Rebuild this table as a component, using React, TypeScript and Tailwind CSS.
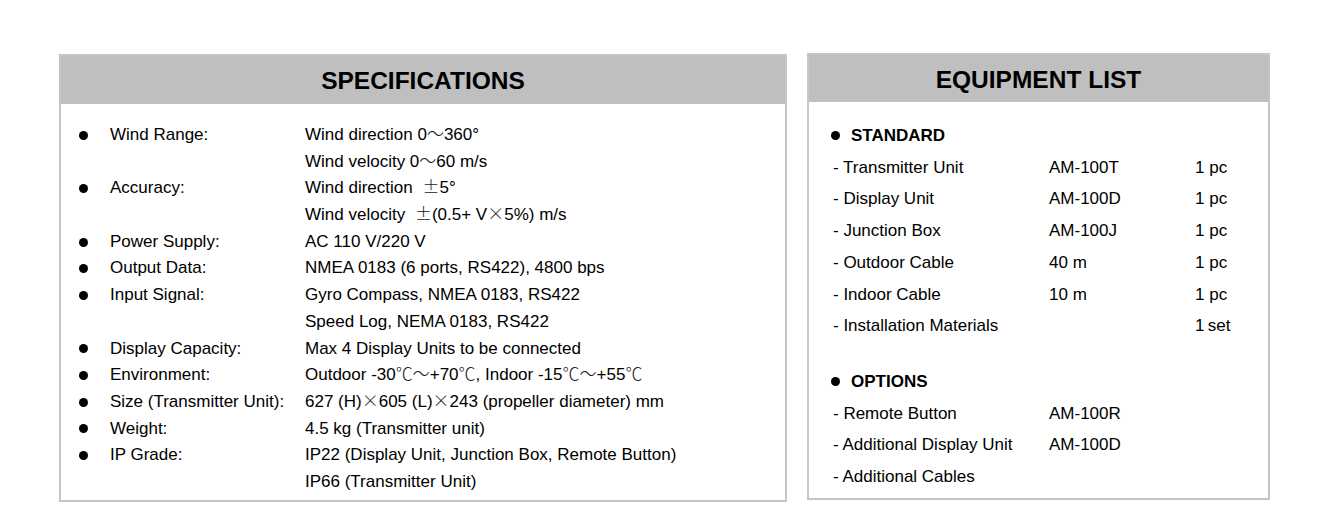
import React from 'react';

const font = { fontFamily: '"Liberation Sans", Arial, "Noto Sans CJK SC", sans-serif' };

const specs: { label?: string; value: string }[] = [
  { label: 'Wind Range:', value: 'Wind direction 0～360°' },
  { value: 'Wind velocity 0～60 m/s' },
  { label: 'Accuracy:', value: 'Wind direction ±5°' },
  { value: 'Wind velocity ±(0.5+ V×5%) m/s' },
  { label: 'Power Supply:', value: 'AC 110 V/220 V' },
  { label: 'Output Data:', value: 'NMEA 0183 (6 ports, RS422), 4800 bps' },
  { label: 'Input Signal:', value: 'Gyro Compass, NMEA 0183, RS422' },
  { value: 'Speed Log, NEMA 0183, RS422' },
  { label: 'Display Capacity:', value: 'Max 4 Display Units to be connected' },
  { label: 'Environment:', value: 'Outdoor -30℃～+70℃, Indoor -15℃～+55℃' },
  { label: 'Size (Transmitter Unit):', value: '627 (H)×605 (L)×243 (propeller diameter) mm' },
  { label: 'Weight:', value: '4.5 kg (Transmitter unit)' },
  { label: 'IP Grade:', value: 'IP22 (Display Unit, Junction Box, Remote Button)' },
  { value: 'IP66 (Transmitter Unit)' },
];

const standard = [
  ['Transmitter Unit', 'AM-100T', '1 pc'],
  ['Display Unit', 'AM-100D', '1 pc'],
  ['Junction Box', 'AM-100J', '1 pc'],
  ['Outdoor Cable', '40 m', '1 pc'],
  ['Indoor Cable', '10 m', '1 pc'],
  ['Installation Materials', '', '1\u2009set'],
];

const options = [
  ['Remote Button', 'AM-100R'],
  ['Additional Display Unit', 'AM-100D'],
  ['Additional Cables', ''],
];

// ±, ～, ×, ℃ come from the CJK face, as in the printed sheet
const Sym: React.FC<{ text: string }> = ({ text }) => {
  const parts = text.split(/([±～×℃])/);
  return (
    <>
      {parts.map((p, i) =>
        /^[±～×℃]$/.test(p) ? (
          <span
            key={i}
            className={`font-light leading-none text-[#222] ${p === '±' ? 'ml-[5px]' : ''}`}
            style={{ fontFamily: '"Noto Sans CJK SC", sans-serif' }}
          >
            {p}
          </span>
        ) : (
          <span key={i}>{p}</span>
        )
      )}
    </>
  );
};

const Dot = () => <span className="block shrink-0 w-[9px] h-[9px] rounded-full bg-black" />;

export default function App() {
  return (
    <div className="min-h-screen bg-white text-black" style={font}>
      <div className="flex items-start pl-[59px] pt-[53px] gap-[20px]">
        {/* Specifications */}
        <div className="w-[728px] h-[448px] mt-[1px] border-2 border-[#c6c6c6] flex flex-col">
          <div className="h-[48px] shrink-0 bg-[#bfbfbf] flex items-center justify-center pt-[3px]">
            <h2 className="text-[24.5px] font-bold">SPECIFICATIONS</h2>
          </div>
          <div className="pt-[18px] text-[17px]">
            {specs.map((s, i) => (
              <div key={i} className="h-[26.7px] grid grid-cols-[49px_195px_1fr] items-center whitespace-nowrap">
                <div className="pl-[18px]">{s.label && <Dot />}</div>
                <div className="leading-[26.7px]">{s.label ?? ''}</div>
                <div className="leading-[26.7px]"><Sym text={s.value} /></div>
              </div>
            ))}
          </div>
        </div>

        {/* Equipment list */}
        <div className="w-[463px] h-[447px] border-2 border-[#c6c6c6] flex flex-col">
          <div className="h-[47px] shrink-0 bg-[#bfbfbf] flex items-center justify-center pt-[3px]">
            <h2 className="text-[24.5px] font-bold">EQUIPMENT LIST</h2>
          </div>
          <div className="pt-[18px] pl-[24px] text-[17px] leading-[31.7px]">
            <div className="flex items-center gap-[11px] -ml-[2px] font-bold">
              <Dot />
              <span>STANDARD</span>
            </div>
            {standard.map(([a, b, c]) => (
              <div key={a} className="grid grid-cols-[216px_146px_1fr]">
                <div>- {a}</div>
                <div>{b}</div>
                <div>{c}</div>
              </div>
            ))}
            <div className="flex items-center gap-[11px] -ml-[2px] font-bold mt-[24px]">
              <Dot />
              <span>OPTIONS</span>
            </div>
            {options.map(([a, b]) => (
              <div key={a} className="grid grid-cols-[216px_1fr]">
                <div>- {a}</div>
                <div>{b}</div>
              </div>
            ))}
          </div>
        </div>
      </div>
    </div>
  );
}
